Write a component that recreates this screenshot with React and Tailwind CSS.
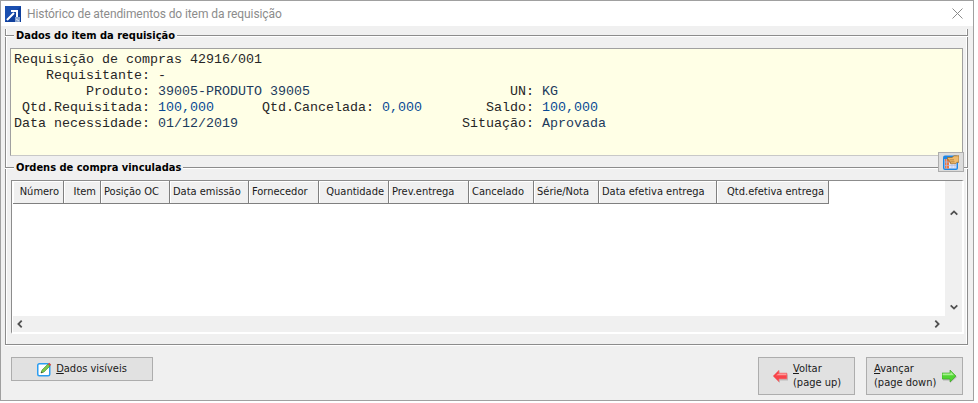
const ui = { fontFamily: 'Roboto, sans-serif' };
const thead = { fontFamily: '"DejaVu Sans Condensed", "DejaVu Sans", sans-serif', fontStretch: "condensed" };

const cols = [
  ["Número", 51, "r"], ["Item", 37, "r"], ["Posição OC", 69, "l"], ["Data emissão", 79, "l"],
  ["Fornecedor", 70, "l"], ["Quantidade", 70, "r"], ["Prev.entrega", 80, "l"], ["Cancelado", 65, "l"],
  ["Série/Nota", 65, "l"], ["Data efetiva entrega", 118, "l"], ["Qtd.efetiva entrega", 112, "r"],
];

function B({ children }) {
  return <span className="text-[#0a4a94]">{children}</span>;
}
function N({ children }) {
  return <span className="text-[#1c3a5c]">{children}</span>;
}

function Legend({ children }) {
  return (
    <div className="flex h-[13px] items-center">
      <div className="w-[9px] h-[2px] border-t border-[#8c8c8c] bg-white" />
      <div className="px-[2px] text-[11px] font-bold leading-[13px] text-black whitespace-nowrap" style={thead}>{children}</div>
      <div className="flex-1 h-[2px] border-t border-[#8c8c8c] bg-white" />
    </div>
  );
}

function Logo() {
  return (
    <svg width="16" height="16" viewBox="0 0 16 16" className="ml-[4px]">
      <rect width="16" height="16" fill="#0f3f9c" />
      <path d="M0 0h16L0 16z" fill="#1a4fb0" />
      <path d="M2 14l7-7M6 5h6v6" stroke="#fff" strokeWidth="2" fill="none" />
      <path d="M10 11h5v5h-5z" fill="#8aa5cf" />
      <path d="M11 13l3 2" stroke="#dbe4f2" strokeWidth="1" />
    </svg>
  );
}

function HandIcon() {
  return (
    <svg width="16" height="15" viewBox="0 0 16 15">
      <rect x="0" y="0.5" width="15" height="14.5" rx="2" fill="#1c86e4" />
      <rect x="1.5" y="4" width="12" height="9.5" fill="#dfe6fa" />
      <rect x="2" y="4" width="4" height="9.5" fill="#f2763a" />
      <path d="M3.5 4v9.5M2 7h11.5M2 10.5h11.5M9 4v9.5M12 4v9.5" stroke="#aebce4" strokeWidth="0.7" />
      <path d="M4.5 2.5H9L11 .8h5v6.5h-2.2l-1 1.4H7.5V7H6.2V4.8H4.5z" fill="#efbb6c" stroke="#9c6a26" strokeWidth="0.7" />
      <path d="M7 4.8h4M7.5 6.8h4" stroke="#9c6a26" strokeWidth="0.6" />
    </svg>
  );
}

function PencilIcon() {
  return (
    <svg width="15" height="15" viewBox="0 0 15 15">
      <rect x="0.75" y="1.75" width="12" height="12" rx="1.5" fill="#fff" stroke="#2c9df0" strokeWidth="1.5" />
      <path d="M4 11l1-3 6-6 2 2-6 6z" fill="#7cc84a" stroke="#3c8a2a" strokeWidth="0.6" />
      <path d="M11 2l1.2-1.2 2 2L13 4z" fill="#e0483a" />
      <path d="M4 11l.5-1.6 1.1 1.1z" fill="#333" />
    </svg>
  );
}

function ArrowLeft() {
  return (
    <svg width="15" height="13" viewBox="0 0 15 13" className="shrink-0">
      <path d="M1 7l6-6v3.5h8v6H7V13z" fill="#999" opacity="0.5" />
      <path d="M0 6l6-6v3h8v6H6v3z" fill="#f8444a" stroke="#e88a8a" strokeWidth="0.6" />
      <path d="M6 3.6h7.4v1.6H3z" fill="#ff9a9a" />
    </svg>
  );
}

function ArrowRight() {
  return (
    <svg width="15" height="13" viewBox="0 0 15 13" className="shrink-0">
      <path d="M15 7L8 1v3.5H1v6h7V13z" fill="#888" opacity="0.5" />
      <path d="M14 6L8 0v3H0v6h8v3z" fill="#50d632" stroke="#3aa322" strokeWidth="0.6" />
      <path d="M.6 3.6H8.6V1.6L12 5.2H.6z" fill="#a6f08e" />
    </svg>
  );
}

function Chev({ d }) {
  return (
    <svg width="8" height="8" viewBox="0 0 8 8">
      <path d={d} fill="none" stroke="#505050" strokeWidth="1.8" />
    </svg>
  );
}

export default function App() {
  return (
    <div className="w-[978px] h-[403px] bg-white overflow-hidden">
      <div className="w-[974px] h-[401px] border border-[#a0a0a0] bg-[#f0f0f0] flex flex-col">
        {/* title bar */}
        <div className="h-[25px] shrink-0 bg-white flex items-center">
          <Logo />
          <div className="ml-[6px] flex-1 text-[12px] tracking-[-0.09px] text-[#8c8c8c] whitespace-nowrap" style={ui}>Histórico de atendimentos do item da requisição</div>
          <svg width="11" height="11" viewBox="0 0 11 11" className="mr-[10px]">
            <path d="M.5.5l10 10M10.5.5l-10 10" stroke="#8a8a8a" strokeWidth="1" />
          </svg>
        </div>

        {/* frame */}
        <div className="relative mt-[3px] ml-[4px] mr-[5px] h-[316px] shrink-0 border-l border-r border-b border-[#8c8c8c] shadow-[inset_1px_0_0_#fff,inset_-1px_0_0_#fff,0_1px_0_#fff] flex flex-col">
          <div className="-mx-px">
            <Legend>Dados do item da requisição</Legend>
          </div>
          <div className="mt-[6px] mx-[4px] h-[108px] border border-[#a0a0a0] border-b-[#c8c8c8] bg-[#ffffe6] pl-[3px] pt-[3px] text-[13.33px] leading-[16px] text-[#262626] whitespace-pre" style={{ fontFamily: '"Liberation Mono", monospace' }}>
            <div>Requisição de compras 42916/001</div>
            <div>{"    Requisitante: -"}</div>
            <div>{"         Produto: "}<N>39005-PRODUTO 39005</N>{"                         UN: "}<N>KG</N></div>
            <div>{" Qtd.Requisitada: "}<B>100,000</B>{"      Qtd.Cancelada: "}<B>0,000</B>{"        Saldo: "}<B>100,000</B></div>
            <div>{"Data necessidade: "}<N>01/12/2019</N>{"                            Situação: "}<N>Aprovada</N></div>
          </div>

          <div className="-mx-px mt-[5px]">
            <Legend>Ordens de compra vinculadas</Legend>
          </div>

          {/* overlay button on the group line */}
          <div className="absolute right-[3px] top-[123px] w-[26px] h-[20px] bg-[#dcdcdc] border border-[#adadad] flex items-center justify-center">
            <HandIcon />
          </div>

          {/* table */}
          <div className="mt-[6px] ml-[5px] mr-[3px] flex-1 border-t border-l border-[#8c8c8c] border-r-2 border-r-white border-b-2 border-b-white bg-white flex flex-col min-h-0">
            <div className="flex-1 flex min-h-0">
              <div className="flex-1 min-w-0">
                <div className="flex h-[23px] pl-px">
                  {cols.map(([t, w, a]) => (
                    <div
                      key={t}
                      style={{ width: w, ...thead }}
                      className={"shrink-0 h-[23px] bg-[#f0f0f0] border-r border-b border-[#7f7f7f] shadow-[inset_1px_1px_0_#fff] text-[11px] leading-[22px] text-[#1a1a1a] whitespace-nowrap overflow-hidden pl-[3px] pr-[4px] " + (a === "r" ? "text-right" : "text-left")}
                    >
                      {t}
                    </div>
                  ))}
                </div>
              </div>
              <div className="w-[17px] shrink-0 bg-[#f0f0f0] flex flex-col items-center justify-between pt-[28px] pb-[5px]">
                <Chev d="M.7 5.7L4 2.4l3.3 3.3" />
                <Chev d="M.7 2.3L4 5.6l3.3-3.3" />
              </div>
            </div>
            <div className="h-[16px] shrink-0 bg-[#f0f0f0] flex items-center justify-between pl-[3px] pr-[21px] border-l border-white">
              <Chev d="M5.7.7L2.4 4l3.3 3.3" />
              <Chev d="M2.3.7L5.6 4 2.3 7.3" />
            </div>
          </div>
          <div className="h-[10px] shrink-0" />
        </div>

        {/* footer */}
        <div className="flex-1 flex items-start justify-between pl-[10px] pr-[10px] pt-[12px]">
          <button className="w-[142px] h-[24px] bg-[#e1e1e1] border border-[#adadad] flex items-center justify-center gap-[4px] text-[11px] text-[#1a1a1a]" style={thead}>
            <PencilIcon />
            <span><span className="underline">D</span>ados visíveis</span>
          </button>
          <div className="flex gap-[11px]">
            <button className="w-[97px] h-[38px] bg-[#e1e1e1] border border-[#adadad] flex items-center pl-[14px] gap-[5px] text-[11px] leading-[14px] text-[#1a1a1a] text-left" style={thead}>
              <ArrowLeft />
              <span className="whitespace-nowrap"><span className="underline">V</span>oltar<br />(page up)</span>
            </button>
            <button className="w-[97px] h-[38px] bg-[#e1e1e1] border border-[#adadad] flex items-center pl-[7px] gap-[6px] text-[11px] leading-[14px] text-[#1a1a1a] text-left" style={thead}>
              <span className="whitespace-nowrap"><span className="underline">A</span>vançar<br />(page down)</span>
              <ArrowRight />
            </button>
          </div>
        </div>
      </div>
    </div>
  );
}
